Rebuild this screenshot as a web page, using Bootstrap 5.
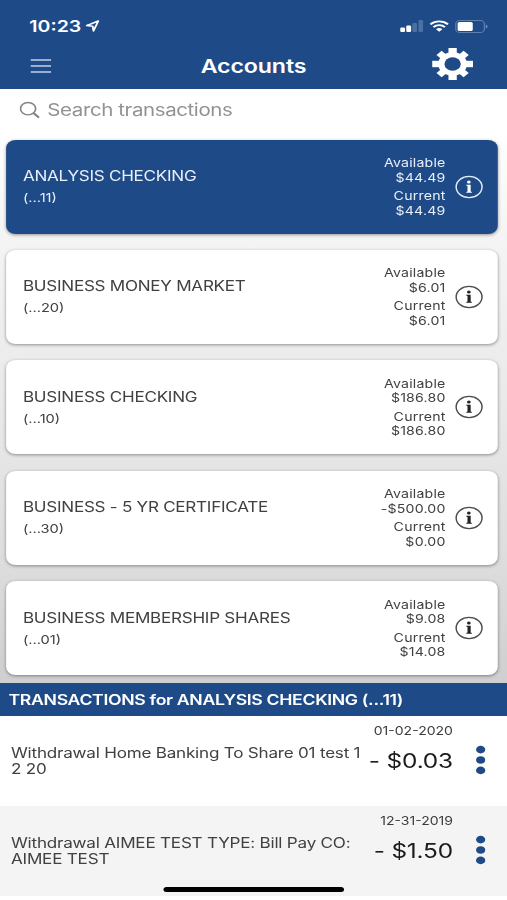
<!DOCTYPE html>
<html lang="en">
<head>
<meta charset="utf-8">
<meta name="viewport" content="width=device-width, initial-scale=1">
<title>Accounts</title>
<link href="https://cdn.jsdelivr.net/npm/bootstrap@5.3.0/dist/css/bootstrap.min.css" rel="stylesheet">
<style>
:root{--brand:#1e4b87}
html,body{margin:0;width:507px;height:900px;overflow:hidden;background:#fff}
body{font-family:Inter,"Liberation Sans",sans-serif;color:#414141}
/* narrow phone layout, widened to fill the window */
.screen{width:415.6px;height:900px;transform:scaleX(1.22);transform-origin:0 0}
.screen span,.screen h1,.screen h2{white-space:nowrap}
.brand-bg{background:var(--brand);color:#fff}
.top-bar{height:89px;padding:13px 15.6px 0 24px}
.status-row{height:26px}
.clock{font-size:16px;font-weight:600}
.arrow{margin-left:3px}
.title-row{height:50px;padding:0 12.4px 0 1px}
.page-title{font-size:19px;font-weight:600;line-height:24px;padding:6px 0 0 4px;letter-spacing:-.1px}
.menu-icon{margin-top:4px}
.search-row{height:41px;padding-left:16.4px;color:#929292;font-size:16.8px;letter-spacing:-.32px}
.search-hint{margin-left:5.4px;padding-top:2px}
.accounts{height:553px;padding:9.6px 8px 0 5px;gap:16.4px;background:linear-gradient(#fff 0,#f4f4f4 20%,#e9e9e9 50%,#dcdcdc 80%,#cfcfcf 100%)}
.account{height:94px;border-radius:8px;background:#fff;padding:0 11.4px 0 13.8px;box-shadow:0 1px 3px rgba(0,0,0,.4)}
.account.brand-bg{background:var(--brand);color:#e9eff9}
.acct-name{font-size:14px;line-height:18px;letter-spacing:-.22px}
.acct-no{font-size:12px;line-height:16px;margin-top:5px}
.figures{font-size:11.6px;line-height:14.5px;letter-spacing:.16px;padding-top:1px}
.figures span:nth-child(3){margin-top:4px}
.info{margin-left:8px}
.section-bar{height:32.5px;padding-left:7px}
.section-title{font-size:14.5px;font-weight:600;letter-spacing:-.29px}
.txn{height:90.3px;padding-left:9px}
.txn-alt{background:#f4f4f4}
.memo{width:294.3px;font-size:14px;line-height:16.6px;padding-top:29px;letter-spacing:-.18px}
.sums{width:68px;color:#1b1b1b}
.date{font-size:11.5px;line-height:14px;margin-top:8px;color:#3c3c3c}
.amount{font-size:20px;line-height:26px;margin-top:10px;letter-spacing:-.15px}
.dots{margin:29px 0 0 19px}
.home-bar{position:absolute;left:134.4px;top:887px;width:147.5px;height:5px;border-radius:3px;background:#000}
</style>
</head>
<body>
<main class="screen d-flex flex-column position-relative">
  <header class="top-bar brand-bg">
    <div class="status-row d-flex align-items-center">
      <span class="clock">10:23</span>
      <svg class="arrow" width="12" height="12" viewBox="0 0 12 12" fill="none" stroke="#fff" stroke-width="1.5" stroke-linejoin="round"><path d="M1 5.6 10.6 1 6.6 11 6 6.2Z"/></svg>
      <div class="d-flex align-items-center ms-auto">
        <svg width="19" height="12" viewBox="0 0 19 12"><g fill="#fff"><rect y="7.5" width="4" height="4.5" rx="1"/><rect x="5" y="5.5" width="4" height="6.5" rx="1"/></g><g fill="#4a70a4"><rect x="10" y="3" width="3.8" height="9" rx="1"/><rect x="15" width="3.8" height="12" rx="1"/></g></svg>
        <svg width="16" height="12" viewBox="0 0 16 12" style="margin-left:5px" fill="none" stroke="#fff" stroke-width="1.9"><path d="M.8 4.4a10.2 10.2 0 0 1 14.4 0M3.3 7.1a6.6 6.6 0 0 1 9.4 0"/><path d="M8 11.8 5.4 9.2a3.7 3.7 0 0 1 5.2 0Z" fill="#fff" stroke="none"/></svg>
        <svg width="27" height="13" viewBox="0 0 27 13" style="margin-left:5px"><rect x=".6" y=".6" width="23.4" height="11.8" rx="3" fill="none" stroke="#5f80af"/><rect x="2.1" y="2.1" width="12.4" height="8.8" rx="1.5" fill="#fff"/><path d="M25.2 4.5v4q1.4-.5 1.4-2t-1.4-2" fill="#7290ba"/></svg>
      </div>
    </div>
    <div class="title-row d-flex align-items-center justify-content-between">
      <svg class="menu-icon" width="17" height="16" viewBox="0 0 17 16" stroke="#c3d0e8" stroke-width="1.4"><path d="M0 2h17M0 8h17M0 14h17"/></svg>
      <h1 class="page-title m-0 ms-3">Accounts</h1>
      <svg width="34" height="32" viewBox="-17 -16 34 32"><g fill="#fff"><rect x="-3.4" y="-16" width="6.8" height="32"/><rect x="-16.7" y="-3.2" width="33.4" height="6.4"/><g transform="rotate(45)"><rect x="-3" y="-15.7" width="6" height="31.4"/><rect x="-15.7" y="-3" width="31.4" height="6"/></g><circle r="11.8"/></g><circle r="6.7" fill="#1e4b87"/></svg>
    </div>
  </header>
  <div class="search-row d-flex align-items-center">
    <svg width="17" height="18" viewBox="0 0 17 18" fill="none" stroke="#858585" stroke-width="1.4"><circle cx="7" cy="7.7" r="6.2"/><path d="m11.5 12 4.4 4.6" stroke-width="1.9"/></svg>
    <span class="search-hint">Search transactions</span>
  </div>
  <section class="accounts d-flex flex-column" id="accounts"></section>
  <div class="section-bar brand-bg d-flex align-items-center"><h2 class="section-title m-0">TRANSACTIONS for ANALYSIS CHECKING (...11)</h2></div>
  <section id="transactions"></section>
  <div class="home-bar"></div>
</main>
<script>
const accounts = [
  ['ANALYSIS CHECKING','11','$44.49','$44.49'],
  ['BUSINESS MONEY MARKET','20','$6.01','$6.01'],
  ['BUSINESS CHECKING','10','$186.80','$186.80'],
  ['BUSINESS - 5 YR CERTIFICATE','30','-$500.00','$0.00'],
  ['BUSINESS MEMBERSHIP SHARES','01','$9.08','$14.08']
];
document.getElementById('accounts').innerHTML = accounts.map(([name,no,avail,cur],i) => `
  <article class="account d-flex align-items-center ${i ? '' : 'brand-bg'}">
    <div class="d-flex flex-column"><span class="acct-name">${name}</span><span class="acct-no">(...${no})</span></div>
    <div class="figures d-flex flex-column text-end ms-auto"><span>Available</span><span>${avail}</span><span>Current</span><span>${cur}</span></div>
    <svg class="info" width="23" height="24" viewBox="0 0 23 24"><circle cx="11.5" cy="12" r="10.6" fill="none" stroke="${i ? '#4d4d4d' : '#e4ecf8'}" stroke-width="1.2"/><g fill="${i ? '#222' : '#fff'}"><circle cx="11.3" cy="7.1" r="1.5"/><path d="M9.2 9.8h3.6v6.6l1 .5v.8H9.2v-.8l1-.5v-5.3l-1-.5z"/></g></svg>
  </article>`).join('');
const transactions = [
  ['Withdrawal Home Banking To Share 01 test 1<br>2 20','01-02-2020','- $0.03'],
  ['Withdrawal AIMEE TEST TYPE: Bill Pay CO:<br>AIMEE TEST','12-31-2019','- $1.50']
];
document.getElementById('transactions').innerHTML = transactions.map(([memo,date,sum],i) => `
  <article class="txn d-flex ${i ? 'txn-alt' : ''}">
    <div class="memo text-nowrap">${memo}</div>
    <div class="sums d-flex flex-column align-items-end"><span class="date">${date}</span><span class="amount">${sum}</span></div>
    <svg class="dots" width="8" height="30" viewBox="0 0 8 30" fill="#1e4b87"><circle cx="4" cy="4.6" r="3.8"/><circle cx="4" cy="15" r="3.8"/><circle cx="4" cy="25.4" r="3.8"/></svg>
  </article>`).join('');
</script>
<script src="https://cdn.jsdelivr.net/npm/bootstrap@5.3.0/dist/js/bootstrap.bundle.min.js"></script>
</body>
</html>
